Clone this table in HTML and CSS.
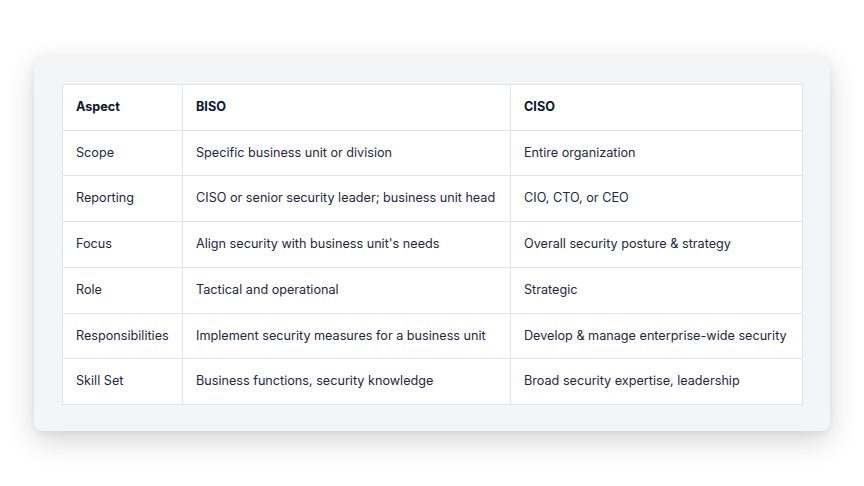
FILE: index.html
```html
<!DOCTYPE html>
<html>
<head>
<meta charset="utf-8">
<link rel="stylesheet" href="styles.css">
</head>
<body>
<div class="page">
  <div class="card">
    <table class="grid">
      <colgroup>
        <col class="c1"><col class="c2"><col class="c3">
      </colgroup>
      <thead>
        <tr><th>Aspect</th><th>BISO</th><th>CISO</th></tr>
      </thead>
      <tbody>
        <tr><td>Scope</td><td>Specific business unit or division</td><td>Entire organization</td></tr>
        <tr><td>Reporting</td><td>CISO or senior security leader; business unit head</td><td>CIO, CTO, or CEO</td></tr>
        <tr><td>Focus</td><td>Align security with business unit's needs</td><td>Overall security posture &amp; strategy</td></tr>
        <tr><td>Role</td><td>Tactical and operational</td><td>Strategic</td></tr>
        <tr><td>Responsibilities</td><td>Implement security measures for a business unit</td><td>Develop &amp; manage enterprise-wide security</td></tr>
        <tr><td>Skill Set</td><td>Business functions, security knowledge</td><td>Broad security expertise, leadership</td></tr>
      </tbody>
    </table>
  </div>
</div>
</body>
</html>
```
FILE: styles.css
```css
html, body {
  margin: 0;
  padding: 0;
  background: #ffffff;
  font-family: Inter, "Liberation Sans", sans-serif;
}
.page {
  width: 864px;
  height: 486px;
  padding: 56px 34px 0 34px;
  box-sizing: border-box;
}
.card {
  width: 796px;
  height: 375px;
  box-sizing: border-box;
  padding: 28px;
  background: #f4f5f7;
  border-radius: 8px;
  box-shadow: 0 10px 28px rgba(0, 0, 0, 0.16), 0 2px 6px rgba(0, 0, 0, 0.06);
}
.grid {
  width: 740px;
  border-collapse: collapse;
  table-layout: fixed;
  background: #ffffff;
}
.c1 { width: 120px; }
.c2 { width: 328px; }
.c3 { width: 292px; }
.grid th, .grid td {
  border: 1px solid #e1e3ea;
  padding: 13px 13px;
  height: 18.7px;
  line-height: 18.7px;
  font-size: 12.65px;
  text-align: left;
  white-space: nowrap;
  color: #1e2740;
}
.grid th {
  font-weight: 700;
  color: #0d1530;
}
```
